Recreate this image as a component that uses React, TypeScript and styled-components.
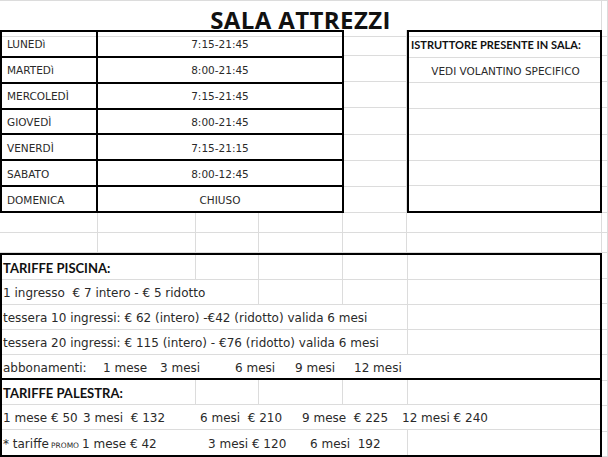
import styled, { createGlobalStyle } from "styled-components";

const GRID = "#dcdcdc";
const LINE = "#000";
const TEXT = "#2a2a2a";

const GlobalStyle = createGlobalStyle`
  html, body { margin: 0; padding: 0; background: #fff; }
  body {
    font-family: "DejaVu Sans", "Liberation Sans", sans-serif;
    color: ${TEXT};
  }
`;

const days = [
  ["LUNEDì", "7:15-21:45"],
  ["MARTEDì", "8:00-21:45"],
  ["MERCOLEDÌ", "7:15-21:45"],
  ["GIOVEDÌ", "8:00-21:45"],
  ["VENERDÌ", "7:15-21:15"],
  ["SABATO", "8:00-12:45"],
  ["DOMENICA", "CHIUSO"],
];

const Sheet = styled.div`
  width: 608px;
  height: 457px;
  overflow: hidden;
  border-top: 1px solid ${GRID};
  box-sizing: border-box;
`;

const TitleRow = styled.div`
  display: grid;
  grid-template-columns: 602px 1fr;
  height: 29px;
`;

const GridCell = styled.div`
  box-sizing: border-box;
  border-right: 1px solid ${GRID};
  border-bottom: 1px solid ${GRID};
`;

const Title = styled(GridCell)`
  display: flex;
  align-items: center;
  justify-content: center;
  font-family: "Open Sans", sans-serif;
  font-weight: 700;
  font-size: 24px;
  letter-spacing: 0.4px;
  color: #111;
  padding-top: 2px;
`;

const Band = styled.div<{ $h: number }>`
  display: flex;
  height: ${(p) => p.$h}px;
`;

const Box = styled.div<{ $w: number }>`
  width: ${(p) => p.$w}px;
  flex: none;
  box-sizing: border-box;
  border: 2px solid ${LINE};
  display: flex;
  flex-direction: column;
`;

const DayRow = styled.div`
  flex: 1;
  display: grid;
  grid-template-columns: 96px 1fr;
  font-size: 10.5px;
  & + & {
    border-top: 2px solid ${LINE};
  }
`;

const Day = styled.div`
  display: flex;
  align-items: center;
  padding: 1px 0 0 5px;
  border-right: 2px solid ${LINE};
`;

const Hours = styled.div`
  display: flex;
  align-items: center;
  justify-content: center;
  padding-top: 1px;
`;

const GridColumn = styled.div<{ $w: number }>`
  width: ${(p) => p.$w}px;
  flex: none;
  display: flex;
  flex-direction: column;
  & > div {
    flex: 1;
  }
`;

const InfoRow = styled.div<{ $center?: boolean }>`
  flex: 1;
  display: flex;
  align-items: center;
  justify-content: ${(p) => (p.$center ? "center" : "flex-start")};
  padding: 1px 0 0 2px;
  font-size: 10.5px;
  border-bottom: 1px solid ${GRID};
  &:last-child {
    border-bottom: none;
  }
`;

const Label = styled.span<{ $size?: number }>`
  font-family: Lato, "Open Sans", sans-serif;
  font-weight: 700;
  font-size: ${(p) => p.$size ?? 13}px;
  color: #111;
`;

const GapRow = styled.div<{ $h: number }>`
  display: grid;
  grid-template-columns: 98px 98px 63px 84px 64px 195px 1fr;
  height: ${(p) => p.$h}px;
`;

const PriceRow = styled.div<{ $cols: string; $split?: boolean }>`
  height: 25px;
  flex: none;
  box-sizing: border-box;
  display: grid;
  grid-template-columns: ${(p) => p.$cols};
  border-bottom: ${(p) => (p.$split ? `2px solid ${LINE}` : `1px solid ${GRID}`)};
  &:last-child {
    border-bottom: none;
  }
`;

const PriceCell = styled.div`
  display: flex;
  align-items: center;
  padding: 2px 0 0 1px;
  font-size: 12px;
  white-space: pre;
  overflow: hidden;
  border-right: 1px solid ${GRID};
  &:last-child {
    border-right: none;
  }
`;

const Seg = styled.span<{ $w?: number }>`
  flex: none;
  width: ${(p) => (p.$w ? `${p.$w}px` : "auto")};
`;

const Promo = styled.span`
  font-size: 7.5px;
  padding-top: 1px;
`;

const HEAD = "194px 63px 84px 65px 1fr";
const WIDE = "257px 84px 65px 1fr";
const LONG = "406px 1fr";
const FULL = "1fr";

const gridCells = (n: number) => Array.from({ length: n }, (_, i) => <GridCell key={i} />);

export default function App() {
  return (
    <>
      <GlobalStyle />
      <Sheet>
        <TitleRow>
          <Title>SALA ATTREZZI</Title>
          <GridCell />
        </TitleRow>

        <Band $h={183}>
          <Box $w={344}>
            {days.map(([day, hours]) => (
              <DayRow key={day}>
                <Day>{day}</Day>
                <Hours>{hours}</Hours>
              </DayRow>
            ))}
          </Box>
          <GridColumn $w={63}>{gridCells(7)}</GridColumn>
          <Box $w={195}>
            <InfoRow>
              <Label $size={11}>ISTRUTTORE PRESENTE IN SALA:</Label>
            </InfoRow>
            <InfoRow $center>VEDI VOLANTINO SPECIFICO</InfoRow>
            <InfoRow />
            <InfoRow />
            <InfoRow />
            <InfoRow />
            <InfoRow />
          </Box>
          <GridColumn $w={6}>{gridCells(7)}</GridColumn>
        </Band>

        <GapRow $h={20}>{gridCells(7)}</GapRow>
        <GapRow $h={20}>{gridCells(7)}</GapRow>

        <Band $h={204}>
          <Box $w={602}>
            <PriceRow $cols={HEAD}>
              <PriceCell>
                <Label>TARIFFE PISCINA:</Label>
              </PriceCell>
              <PriceCell />
              <PriceCell />
              <PriceCell />
              <PriceCell />
            </PriceRow>
            <PriceRow $cols={WIDE}>
              <PriceCell>1 ingresso  € 7 intero - € 5 ridotto</PriceCell>
              <PriceCell />
              <PriceCell />
              <PriceCell />
            </PriceRow>
            <PriceRow $cols={LONG}>
              <PriceCell>tessera 10 ingressi: € 62 (intero) -€42 (ridotto) valida 6 mesi</PriceCell>
              <PriceCell />
            </PriceRow>
            <PriceRow $cols={LONG}>
              <PriceCell>tessera 20 ingressi: € 115 (intero) - €76 (ridotto) valida 6 mesi</PriceCell>
              <PriceCell />
            </PriceRow>
            <PriceRow $cols={FULL} $split>
              <PriceCell>
                <Seg $w={100}>abbonamenti:</Seg>
                <Seg $w={57}>1 mese</Seg>
                <Seg $w={75}>3 mesi</Seg>
                <Seg $w={60}>6 mesi</Seg>
                <Seg $w={59}>9 mesi</Seg>
                <Seg>12 mesi</Seg>
              </PriceCell>
            </PriceRow>
            <PriceRow $cols={HEAD}>
              <PriceCell>
                <Label>TARIFFE PALESTRA:</Label>
              </PriceCell>
              <PriceCell />
              <PriceCell />
              <PriceCell />
              <PriceCell />
            </PriceRow>
            <PriceRow $cols={FULL}>
              <PriceCell>
                <Seg $w={80}>1 mese € 50</Seg>
                <Seg $w={117}>3 mesi  € 132</Seg>
                <Seg $w={102}>6 mesi  € 210</Seg>
                <Seg $w={100}>9 mese  € 225</Seg>
                <Seg>12 mesi € 240</Seg>
              </PriceCell>
            </PriceRow>
            <PriceRow $cols={LONG}>
              <PriceCell>
                <Seg $w={48}>* tariffe</Seg>
                <Seg $w={31}>
                  <Promo>PROMO</Promo>
                </Seg>
                <Seg $w={126}>1 mese € 42</Seg>
                <Seg $w={102}>3 mesi € 120</Seg>
                <Seg>6 mesi  192</Seg>
              </PriceCell>
              <PriceCell />
            </PriceRow>
          </Box>
          <GridColumn $w={6}>{gridCells(8)}</GridColumn>
        </Band>
      </Sheet>
    </>
  );
}
